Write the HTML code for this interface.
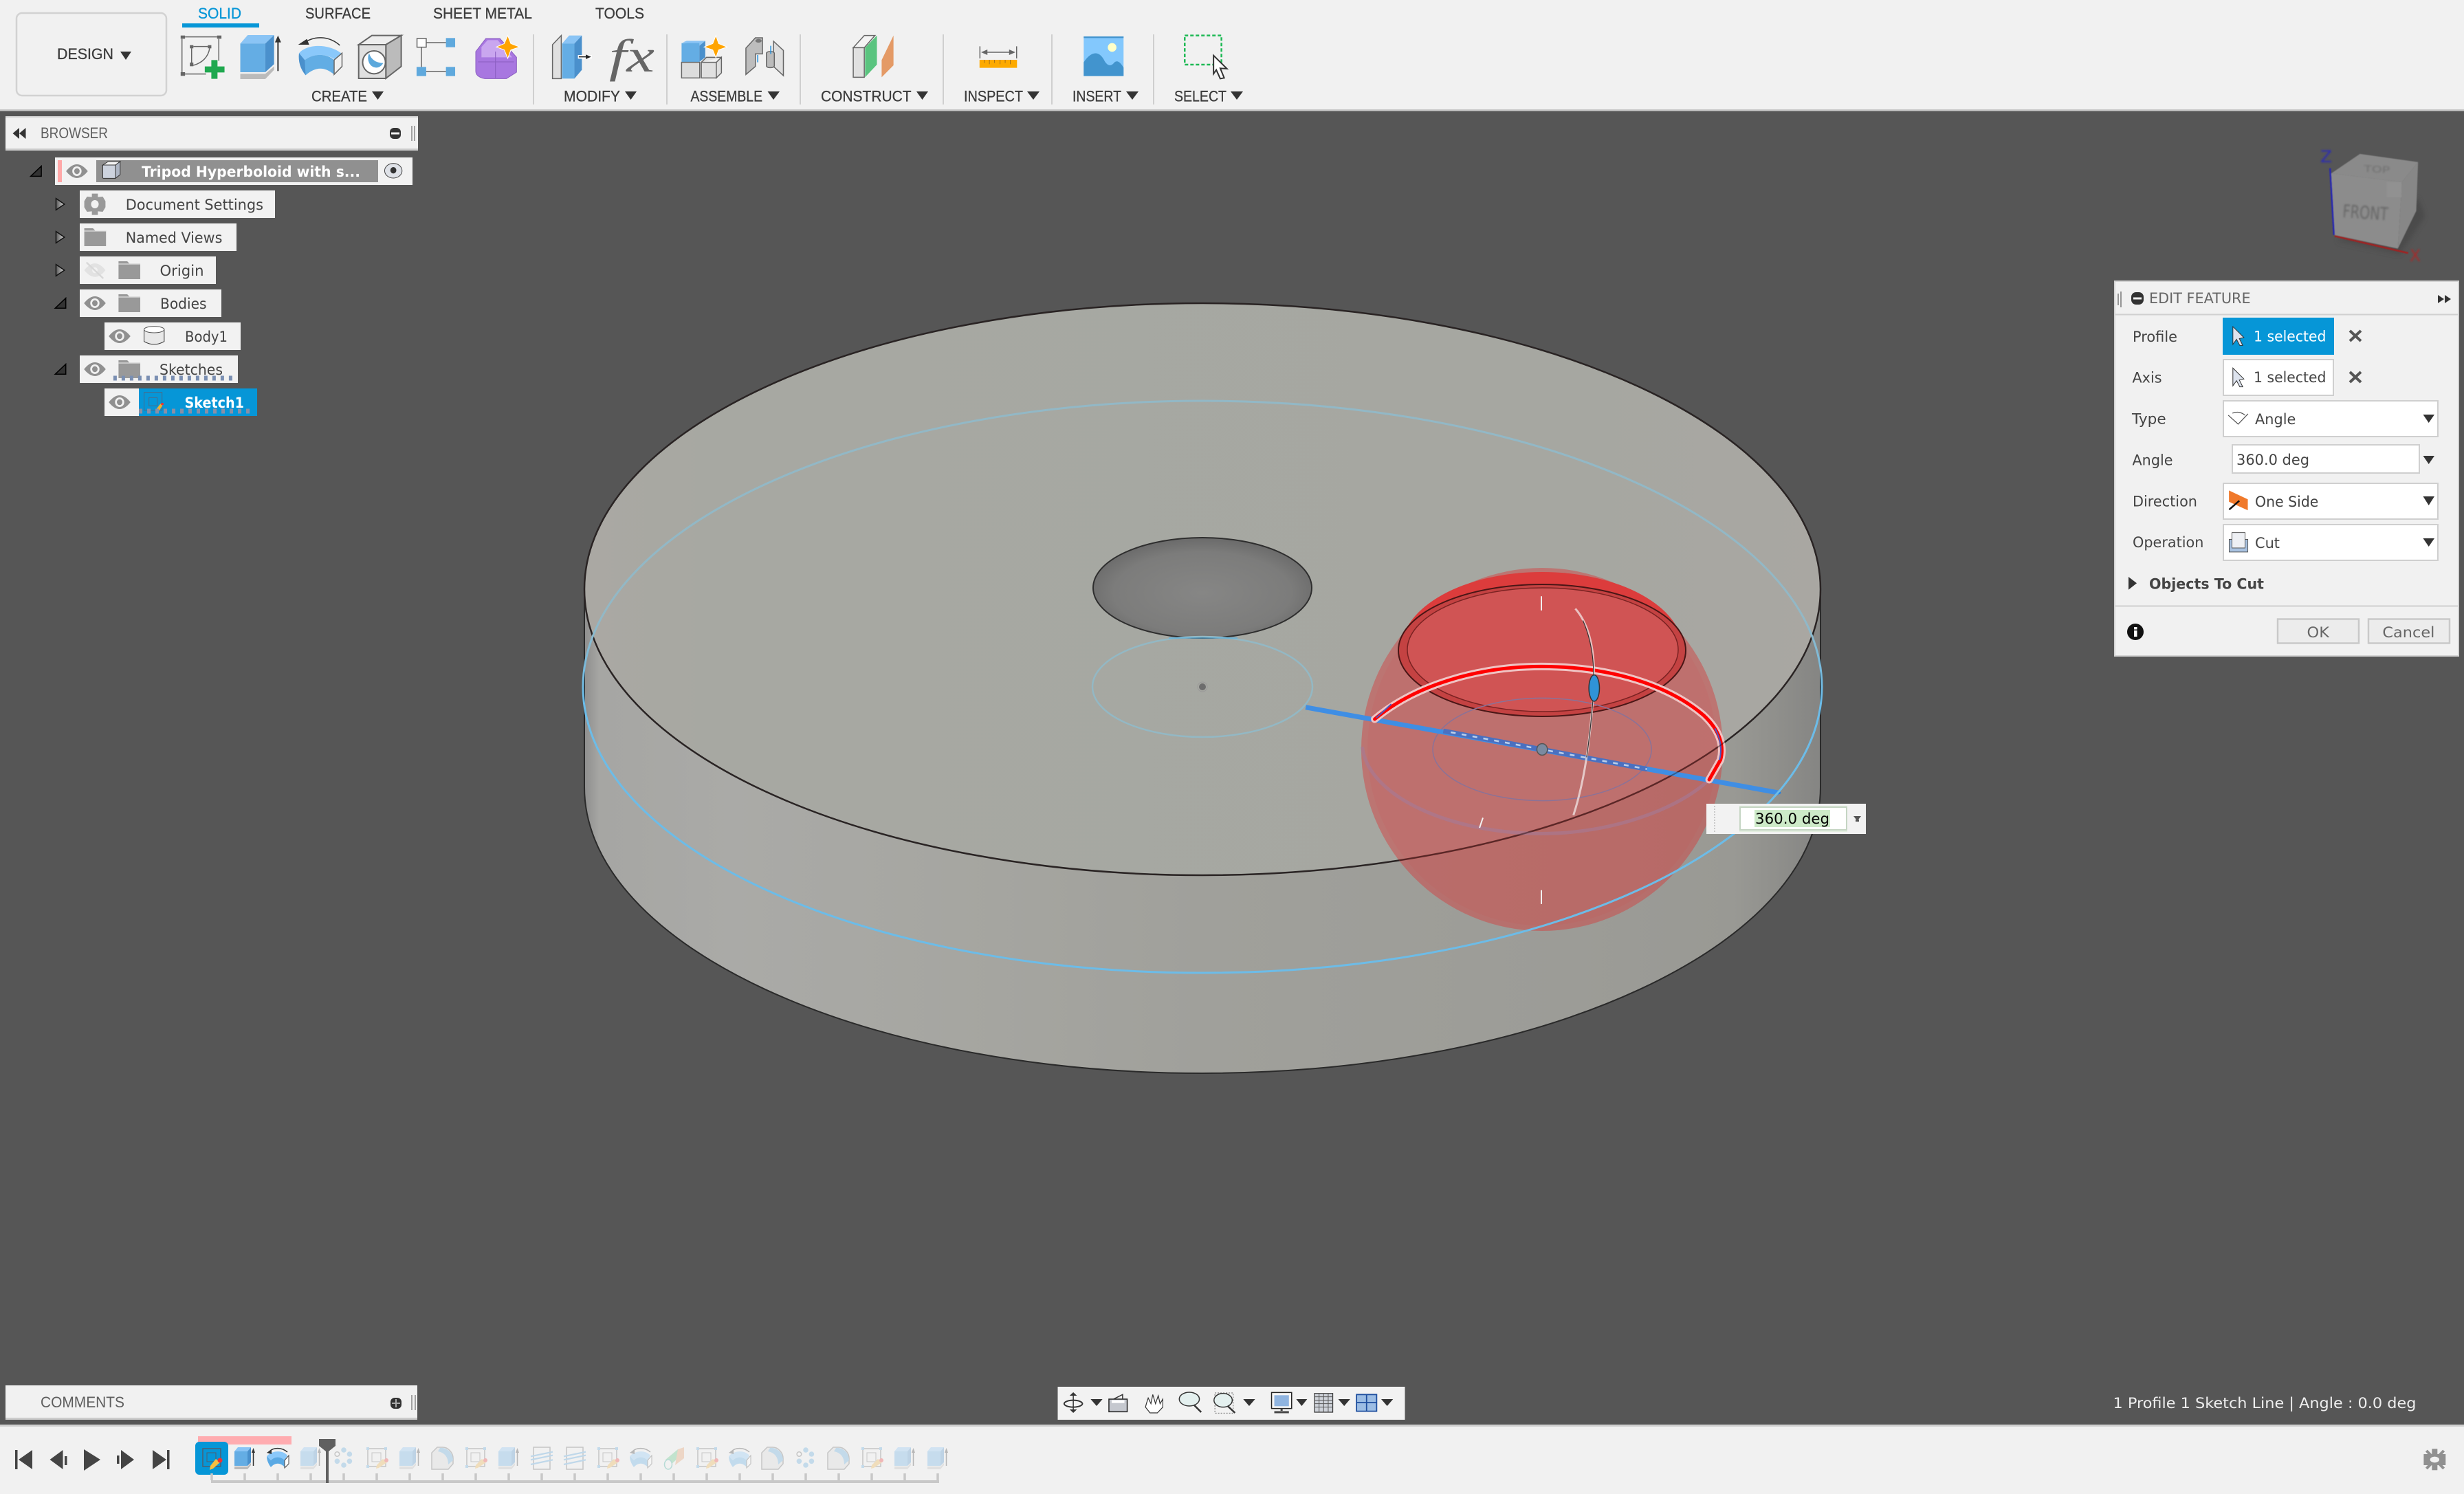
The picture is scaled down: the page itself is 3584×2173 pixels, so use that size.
<!DOCTYPE html>
<html lang="en"><head><meta charset="utf-8"><title>Fusion</title>
<style>
html,body{margin:0;padding:0;background:#555;overflow:hidden}
svg{display:block}
.z *,defs *{vector-effect:non-scaling-stroke}
.s{font-family:"Liberation Sans",sans-serif;font-size:22px;fill:#3c3c3c;stroke:#3c3c3c;stroke-width:.3}
.d{font-family:"DejaVu Sans","Liberation Sans",sans-serif;font-size:21px;fill:#444}
</style></head><body>
<svg xmlns="http://www.w3.org/2000/svg" width="3584" height="2173" viewBox="0 0 3584 2173">
<defs>
<linearGradient id="side" x1="0" x2="1" y1="0" y2="0"><stop offset="0" stop-color="#8e8e8e"/><stop offset=".012" stop-color="#a6a6a3"/><stop offset=".12" stop-color="#aaaaa7"/><stop offset=".3" stop-color="#a6a6a1"/><stop offset=".5" stop-color="#a0a09b"/><stop offset=".8" stop-color="#9c9c97"/><stop offset=".93" stop-color="#999994"/><stop offset="1" stop-color="#858583"/></linearGradient>
<linearGradient id="top" x1="0" x2="1" y1="0" y2="0"><stop offset="0" stop-color="#aaa8a3"/><stop offset=".1" stop-color="#a7a8a2"/><stop offset=".8" stop-color="#a6a7a1"/><stop offset="1" stop-color="#a9a7a2"/></linearGradient>
<linearGradient id="sk" gradientUnits="userSpaceOnUse" x1="0" x2="0" y1="900" y2="1010"><stop offset="0" stop-color="#92b8c6"/><stop offset="1" stop-color="#6cbce8"/></linearGradient>
<radialGradient id="hole" cx=".5" cy=".55" r=".58"><stop offset="0" stop-color="#868685"/><stop offset=".7" stop-color="#7c7c7b"/><stop offset="1" stop-color="#666"/></radialGradient>
<linearGradient id="trg" x1="0" x2="1" y1="0" y2="0"><stop offset="0" stop-color="#555"/><stop offset="1" stop-color="#ddd"/></linearGradient>
<filter id="b2"><feGaussianBlur stdDeviation="1.2"/></filter>
<filter id="b8"><feGaussianBlur stdDeviation="9"/></filter>
<g id="eye"><path d="M-40 0Q0-60 40 0Q0 60-40 0Z" fill="#909090"/><ellipse rx="17" ry="21" fill="#f2f2f2"/><ellipse rx="10" ry="13" fill="#909090"/></g>
<g id="folder"><path d="M0 0H32L40 10H80V78H0Z" fill="#999"/><path d="M0 12H80" stroke="#f2f2f2" stroke-width="1"/></g>
<g id="tria"><path d="M-20 22H19V-22Z" fill="#333" stroke="#000" stroke-width="1.5"/></g>
<g id="trib"><path d="M-16-25L15 0L-16 25Z" fill="url(#trg)" stroke="#111" stroke-width="1.5"/></g>

<g id="tex"><path d="M-15-10L-10-16H9L4-10Z" fill="#8ac4f5"/><rect x="-15" y="-10" width="19" height="21" fill="#64ade4"/><path d="M4-10L9-16V6L4 11Z" fill="#4a90cc"/><path d="M-15 12H4L9 7V10L4 16H-15Z" fill="#bbb"/><path d="M12.500-12V11" stroke="#333" stroke-width="1.500"/><path d="M10-8L12.500-15L15-8Z" fill="#333"/></g>
<g id="trv"><path d="M-16-3C-8-12 8-12 14-4L10 3C4-3-4-3-10 3Z" fill="#8ac8fa"/><path d="M-16-3L-10 3C-4-3 4-3 10 3V13C4 6-4 6-10 13C-14 8-16 2-16-3Z" fill="#5aa9e4"/><path d="M10 3L16-4V8L10 14Z" fill="#fff" stroke="#444" stroke-width="1"/><path d="M-12-10C-6-16 6-16 14-9" fill="none" stroke="#333" stroke-width="1.500"/><path d="M-16-8L-9-13L-9-6Z" fill="#333"/></g>
<g id="tci" fill="#5ba8dc"><circle cx="0" cy="-12" r="3.800"/><circle cx="8.400" cy="-6" r="3.800"/><circle cx="8.400" cy="4.300" r="3.800"/><circle cx="0" cy="10" r="3.800"/><circle cx="-9.600" cy="4.300" r="3.800"/><circle cx="-9.600" cy="-6" r="3.300" fill="#fff" stroke="#666" stroke-width="1.500"/></g>
<g id="tfi"><path d="M-16-8L-8-16H0C8-16 15-8 15 0V8L8 16H-16Z" fill="#d8d8d8" stroke="#666" stroke-width="1.500"/><path d="M-4-15C6-16 15-8 15 3L8 9C8 0 4-8-7-10Z" fill="#5ba8dc"/></g>
<g id="tst"><rect x="-12" y="-16" width="24" height="32" fill="none" stroke="#666" stroke-width="1.500"/><path d="M-16-2.700L16-9.300M-16 2.300L16-4.300M-16 9L16 2.300" stroke="#4e9fdc" stroke-width="2.200"/></g>
<g id="tgr"><path d="M-12 2L6-13V0L-6 11Z" fill="#5ac47f"/><path d="M6-13L15-16V0L2 10Z" fill="#e49a66"/><ellipse cx="-8" cy="9" rx="5.500" ry="7" fill="#f2f2f2" stroke="#3a9" stroke-width="1.500"/></g>
<g id="tsk"><rect x="-13" y="-14" width="26" height="26" fill="none" stroke="#666" stroke-width="1.500"/><g fill="#5ba8dc"><rect x="-15" y="-16" width="4" height="4"/><rect x="11" y="-16" width="4" height="4"/><rect x="-15" y="10" width="4" height="4"/></g><rect x="-7" y="-8" width="13" height="13" fill="none" stroke="#666" stroke-width="1"/><path d="M9 1L15 6L3 14L-1 15L0 10Z" fill="#f0b040"/><circle cx="14" cy="3" r="3" fill="#e33"/></g>
<g id="tsa"><rect x="-13" y="-14" width="26" height="26" fill="none" stroke="#4d5f70" stroke-width="1.500"/><rect x="-7" y="-8" width="13" height="13" fill="none" stroke="#4d5f70" stroke-width="1"/><path d="M6 1L12 6L2 15L-3 17L-2 11Z" fill="#f8c040"/><circle cx="12" cy="3" r="3.500" fill="#e33"/></g>
</defs>

<rect width="3584" height="2173" fill="#565656"/>

<!-- TOOLBAR -->
<rect width="3584" height="160" fill="#f1f1f1"/>
<rect y="159" width="3584" height="2.500" fill="#c9c9c9"/>
<rect x="24" y="19" width="218" height="120" rx="8" fill="#f1f1f1" stroke="#d2d2d2" stroke-width="2.500"/>
<text class="s" x="83" y="86" textLength="82" lengthAdjust="spacingAndGlyphs">DESIGN</text>
<text class="s" x="288" y="27" textLength="63" lengthAdjust="spacingAndGlyphs" style="fill:#0696d7;stroke:#0696d7">SOLID</text>
<text class="s" x="444" y="27" textLength="95" lengthAdjust="spacingAndGlyphs">SURFACE</text>
<text class="s" x="630" y="27" textLength="144" lengthAdjust="spacingAndGlyphs">SHEET METAL</text>
<text class="s" x="866" y="27" textLength="71" lengthAdjust="spacingAndGlyphs">TOOLS</text>
<rect x="265" y="34" width="112" height="6" fill="#0696d7"/>
<text class="s" x="453" y="147.500" textLength="81" lengthAdjust="spacingAndGlyphs">CREATE</text>
<text class="s" x="820" y="147.500" textLength="82" lengthAdjust="spacingAndGlyphs">MODIFY</text>
<text class="s" x="1004.500" y="147.500" textLength="104.500" lengthAdjust="spacingAndGlyphs">ASSEMBLE</text>
<text class="s" x="1194" y="147.500" textLength="131.500" lengthAdjust="spacingAndGlyphs">CONSTRUCT</text>
<text class="s" x="1402" y="147.500" textLength="86" lengthAdjust="spacingAndGlyphs">INSPECT</text>
<text class="s" x="1560" y="147.500" textLength="71" lengthAdjust="spacingAndGlyphs">INSERT</text>
<text class="s" x="1708" y="147.500" textLength="76" lengthAdjust="spacingAndGlyphs">SELECT</text>
<g fill="#333">
<path d="M175 75H191L183 87Z"/><path d="M541 133H558L549.500 145Z"/><path d="M909 133H926L917.500 145Z"/><path d="M1116.500 133H1134L1125 145Z"/><path d="M1333 133H1350L1341.500 145Z"/><path d="M1494 133H1512L1503 145Z"/><path d="M1638 133H1656L1647 145Z"/><path d="M1790 133H1808L1799 145Z"/>
</g>
<g fill="#cfcfcf"><rect x="775" y="50" width="2" height="102"/><rect x="969" y="50" width="2" height="102"/><rect x="1163" y="50" width="2" height="102"/><rect x="1371" y="50" width="2" height="102"/><rect x="1529" y="50" width="2" height="102"/><rect x="1677" y="50" width="2" height="102"/></g>
<text x="886" y="104" textLength="66" lengthAdjust="spacingAndGlyphs" style="font-family:'Liberation Serif',serif;font-style:italic;font-size:68px;fill:#666">fx</text>

<g class="z" transform="scale(.6378,.3333)">
 <g fill="#666"><rect x="412" y="155" width="10" height="14"/><rect x="495" y="155" width="10" height="14"/><rect x="412" y="315" width="10" height="16"/><rect x="433" y="197" width="8" height="14"/><rect x="474" y="197" width="8" height="14"/><rect x="433" y="273" width="8" height="16"/></g>
 <path d="M422 161H495M415 170V315M422 323H470M499 170V265M441 203H474M437 211V273M441 285C460 275 475 250 478 211" fill="none" stroke="#666" stroke-width="1.500"/>
 <path d="M482 262H496V290H512V316H496V344H482V316H467V290H482Z" fill="#1fa84f"/>
 <path d="M548 190L565 153H625L605 190Z" fill="#8ac4f5"/><rect x="548" y="190" width="57" height="125" fill="#64ade4"/><path d="M605 190L625 153V280L605 315Z" fill="#4a90cc"/><path d="M548 322H605L625 290V305L605 345H548Z" fill="#bbb"/>
 <path d="M634 175V310" stroke="#333" stroke-width="2"/><path d="M627 185L634 155L641 185Z" fill="#333"/>
 <path d="M682 232C700 190 750 190 778 232L765 262C745 232 715 232 695 262Z" fill="#8ac8fa"/>
 <path d="M682 232L695 262C715 232 745 232 762 262V325C740 290 720 290 697 328C685 300 680 270 682 232Z" fill="#62ade4"/>
 <path d="M682 232L695 262L697 328C685 300 680 270 682 232Z" fill="#4a90cc"/>
 <path d="M762 262L780 232V290L762 325Z" fill="#f0f0f0" stroke="#666" stroke-width="1.500"/>
 <path d="M775 198C750 155 715 155 692 190" fill="none" stroke="#333" stroke-width="1.500"/><path d="M680 195L700 170L705 195Z" fill="#333"/>
 <path d="M818 195L848 155H915L880 195Z" fill="#eee" stroke="#666" stroke-width="2"/><path d="M880 195L915 155V290L880 342Z" fill="#bbb" stroke="#666" stroke-width="2"/><rect x="818" y="195" width="62" height="147" fill="#e0e0e0" stroke="#666" stroke-width="2"/>
 <ellipse cx="853" cy="272" rx="26" ry="50" fill="#fff" stroke="#666" stroke-width="2"/><path d="M842 232A18 40 0 1 0 874 275C856 275 845 255 842 232Z" fill="#5ba8dc"/>
 <rect x="951" y="168" width="21" height="38" fill="#fff" stroke="#666" stroke-width="1.500"/><g fill="#5fa9dd"><rect x="1017" y="166" width="21" height="40"/><rect x="950" y="292" width="22" height="40"/><rect x="1017" y="292" width="21" height="40"/></g>
 <path d="M972 186H1017M961 206V292M972 312H1017" stroke="#666" stroke-width="1.500"/>
 <path d="M1108 168H1140L1178 250V315L1155 343H1105Q1085 335 1085 310V225Z" fill="#a877e0" stroke="#8a5ec0" stroke-width="1"/><path d="M1098 205L1112 175H1135L1168 250H1098Z" fill="#c9a6ef"/><path d="M1090 270H1172M1130 225V340" stroke="#8a5ec0" stroke-width="1"/>
 <path d="M1158 155L1165 190L1185 205L1165 218L1158 255L1150 218L1132 205L1150 190Z" fill="#ffa400" stroke="#fff" stroke-width="1"/>
 <path d="M1260 195L1280 155V343H1260Z" fill="#e0e0e0" stroke="#666" stroke-width="1.500"/>
 <path d="M1282 190L1298 155H1327L1310 190Z" fill="#8ac4f5"/><rect x="1282" y="190" width="28" height="153" fill="#64ade4"/><path d="M1310 190L1327 155V305L1310 343Z" fill="#4a90cc"/>
 <path d="M1318 240H1350V256H1318Z" fill="#fff"/><path d="M1320 248H1340" stroke="#222" stroke-width="1.500"/><path d="M1336 238L1348 248L1336 258Z" fill="#222"/>
</g>
<g class="z" transform="translate(1000,0) scale(.574,.3333)">
 <path d="M-12 185L-2 178H45L30 200Z" fill="#8ac4f5"/><rect x="-15" y="188" width="45" height="82" fill="#64ade4"/><path d="M30 200L45 178V250L30 270Z" fill="#4a90cc"/>
 <path d="M35 272H73V340H35ZM73 272L86 250V318L73 340ZM35 272L48 250H86" fill="#e0e0e0" stroke="#666" stroke-width="1.500"/><rect x="-15" y="272" width="46" height="68" fill="#dcdcdc" stroke="#666" stroke-width="1.500"/>
 <path d="M72 155L79 190L100 205L79 218L72 252L64 218L42 205L64 190Z" fill="#ffa400" stroke="#fff" stroke-width="1"/>
 <path d="M148 210L172 165H190V235H172V290L148 325Z" fill="#bdbdbd" stroke="#666" stroke-width="1.500"/>
 <ellipse cx="180" cy="178" rx="8" ry="8" fill="#777"/>
 <path d="M218 180L243 220V330L218 290Z" fill="#dedede" stroke="#666" stroke-width="1.500"/>
 <rect x="200" y="225" width="20" height="70" rx="8" fill="#bbb" stroke="#666" stroke-width="1.500"/>
 <path d="M178 240V272M211 200V235" stroke="#1d8fdf" stroke-width="1.500"/>
 <path d="M420 208L448 155H475L448 208Z" fill="#f4f4f4" stroke="#666" stroke-width="1.500"/><rect x="420" y="208" width="28" height="129" fill="#e0e0e0" stroke="#666" stroke-width="1.500"/>
 <path d="M450 208L480 155V282L450 337Z" fill="#5ac47f"/><path d="M492 262L522 155V285L492 337Z" fill="#e49a66"/>
 <path d="M741 202V255M834 202V255M750 228H825" stroke="#666" stroke-width="1.500"/><path d="M744 228L760 216V240ZM831 228L815 216V240Z" fill="#666"/>
 <rect x="740" y="261" width="95" height="35" fill="#fdaa00"/><path d="M752 261V275M765 261V280M778 261V275M792 261V280M805 261V275M818 261V280" stroke="#a5701c" stroke-width="1"/>
 <rect x="1004" y="159" width="101" height="173" fill="#83c8fd"/><rect x="1004" y="159" width="101" height="7" fill="#4294ce"/>
 <ellipse cx="1076" cy="207" rx="11" ry="19" fill="#ffffc8"/>
 <path d="M1004 272C1020 230 1040 215 1055 260C1062 285 1072 295 1082 272C1090 260 1098 275 1105 295V332H1004Z" fill="#4294ce"/>
 <rect x="1260" y="155" width="93" height="127" fill="none" stroke="#1db954" stroke-width="2.500" stroke-dasharray="5 3"/>
 <path d="M1333 242L1367 300L1350 298L1360 340L1350 343L1340 305L1333 322Z" fill="#fff" stroke="#333" stroke-width="2"/>
</g>

<!-- 3D BODY -->
<path d="M850 857V1145A899 416 0 0 0 2648 1145V857Z" fill="url(#side)"/>
<ellipse cx="1749" cy="857" rx="899" ry="416" fill="url(#top)"/>
<path d="M850 857V1145A899 416 0 0 0 2648 1145V857" fill="none" stroke="#2a2a2a" stroke-width="2"/>
<ellipse cx="1749" cy="857" rx="899" ry="416" fill="none" stroke="#2a2a2a" stroke-width="2.500"/>
<ellipse cx="1749" cy="855" rx="159" ry="73" fill="url(#hole)" stroke="#2e2e2e" stroke-width="2"/>
<ellipse cx="1749" cy="999" rx="160" ry="73" fill="none" stroke="#93b8c4" stroke-width="2.500"/>
<path d="M1700 928H1800" stroke="#4ab0e8" stroke-width="1.500" stroke-opacity=".7"/>
<circle cx="1749" cy="999" r="7" fill="none" stroke="#999" stroke-width="1"/><circle cx="1749" cy="999" r="5" fill="#6d6d6d"/>

<!-- SPHERE -->
<ellipse cx="2243" cy="1090" rx="263" ry="264" fill="#d63a3a" fill-opacity=".46"/>
<ellipse cx="2243" cy="1090" rx="254" ry="256" fill="#d63a3a" fill-opacity=".08"/>
<path d="M2038 945A205 113 0 0 1 2448 945Z" fill="#dc3c3c"/>
<ellipse cx="2243" cy="946" rx="209" ry="96" fill="#c44242" stroke="#4a1616" stroke-width="2"/>
<ellipse cx="2244" cy="945" rx="197" ry="90" fill="#d05454" stroke="#7a2222" stroke-width="1.500"/>
<g class="z" transform="translate(1880,780) scale(.5485,.3827)">
 <ellipse cx="662" cy="810" rx="290" ry="195" fill="none" stroke="#8a7298" stroke-width="1.500"/>
 <path d="M185 800C200 990 420 1130 662 1130C880 1130 1080 1000 1130 880" fill="none" stroke="#a57a98" stroke-opacity=".6" stroke-width="5"/>
 <path d="M35 650L1290 975" stroke="#3f8ee4" stroke-width="7"/>
 <path d="M400 740L940 885" stroke="#4a70c0" stroke-width="7"/>
 <path d="M420 745L940 885" stroke="#bcd0ea" stroke-width="2.500" stroke-dasharray="7 9"/>
 <circle cx="1290" cy="975" r="5" fill="#1a7fea"/>
 <ellipse cx="662" cy="810" rx="14" ry="22" fill="#7a8aa0" stroke="#555" stroke-width="1.500"/>
 <path d="M218 695C330 560 500 495 660 495C850 495 1000 570 1090 680C1135 740 1145 800 1135 850L1105 925" fill="none" stroke="#efc4c4" stroke-width="11" stroke-linecap="round"/>
 <path d="M218 695C330 560 500 495 660 495C850 495 1000 570 1090 680C1135 740 1145 800 1135 850L1105 925" fill="none" stroke="#f00" stroke-width="5" stroke-linecap="round"/>
 <path d="M222 690L262 638M1120 730C1135 770 1140 810 1132 850" fill="none" stroke="#4a5cc0" stroke-width="2"/>
 <path d="M750 275C790 340 810 460 795 650C785 820 770 950 745 1060" fill="none" stroke="#f4ecec" stroke-width="3" stroke-opacity=".72"/>
 <path d="M770 320C795 400 805 500 795 650C790 740 785 790 780 840" fill="none" stroke="#333" stroke-width="1.200"/>
 <ellipse cx="800" cy="577" rx="14" ry="50" fill="#2f93d8" stroke="#333" stroke-width="1.500"/>
 <path d="M660 228V282M660 1345V1398M505 1070L496 1108" stroke="#f2f2f2" stroke-width="2"/>
</g>
<ellipse cx="1749" cy="857" rx="899" ry="416" fill="none" stroke="#2a1a1a" stroke-opacity=".45" stroke-width="2"/>
<ellipse cx="1749" cy="999" rx="901" ry="416" fill="none" stroke="url(#sk)" stroke-width="3"/>

<!-- DIM POPUP -->
<rect x="2482" y="1169" width="232" height="44" fill="#f2f2f2"/>
<path d="M2494 1172V1210" stroke="#bbb" stroke-width="1.500" stroke-dasharray="2 2"/>
<rect x="2530" y="1172" width="157" height="38" fill="#e3eee0"/>
<rect x="2531" y="1174" width="155" height="33" fill="#fff" stroke="#c5d5c3" stroke-width="2"/>
<rect x="2552" y="1178" width="110" height="25" fill="#cdeac8"/>
<text class="d" x="2553" y="1198" textLength="108" lengthAdjust="spacingAndGlyphs" style="fill:#000">360.0 deg</text>
<path d="M2696 1187H2707L2701.500 1194Z" fill="#555"/><rect x="2699" y="1192" width="5" height="3" fill="#555"/>

<!-- VIEWCUBE -->
<g class="z" transform="translate(3060,190) scale(.3342,.4975)">
 <path d="M1010 320L1290 360L1400 250L1370 200Z" fill="#3f3f3f" opacity=".5" filter="url(#b8)"/>
 <g filter="url(#b2)">
 <path d="M990 125L1115 68L1368 92L1298 150Z" fill="#8a8a8a"/>
 <path d="M990 125L1298 150L1280 345L1005 305Z" fill="#8c8c8c"/>
 <path d="M1298 150L1368 92L1360 235L1280 345Z" fill="#878787"/>
 <rect x="1232" y="150" width="65" height="45" fill="#9a9a9a" opacity=".35"/>
 <path d="M985 110L1002 305" stroke="#2626b0" stroke-width="2.500"/>
 <path d="M1005 308L1325 358" stroke="#a02020" stroke-width="2.500"/>
 </g>
</g>
<text x="3407" y="316" textLength="66" lengthAdjust="spacingAndGlyphs" transform="rotate(4 3407 316)" style="font-family:'DejaVu Sans',sans-serif;font-size:26px;fill:#666" filter="url(#b2)">FRONT</text>
<text x="3438" y="250" textLength="38" lengthAdjust="spacingAndGlyphs" transform="rotate(3 3438 250)" style="font-family:'DejaVu Sans',sans-serif;font-size:13px;fill:#707070" filter="url(#b2)">TOP</text>
<text x="3375" y="236" textLength="17" lengthAdjust="spacingAndGlyphs" style="font-family:'DejaVu Sans',sans-serif;font-size:24px;fill:#2a2ab4" filter="url(#b2)">Z</text>
<text x="3505" y="380" textLength="16" lengthAdjust="spacingAndGlyphs" style="font-family:'DejaVu Sans',sans-serif;font-size:24px;fill:#a52a2a" filter="url(#b2)">X</text>

<!-- BROWSER -->
<rect x="8" y="169" width="600" height="50" fill="#f1f1f1"/>
<rect x="8" y="216" width="600" height="3" fill="#ccc"/>
<rect x="8" y="169" width="600" height="2" fill="#d6d6d6"/>
<text class="s" x="59" y="201" textLength="98" lengthAdjust="spacingAndGlyphs" style="fill:#5e5e5e;stroke:none">BROWSER</text>
<path d="M28 186L18.500 194L28 202ZM37.500 186L28 194L37.500 202Z" fill="#333"/>
<rect x="567" y="186" width="16" height="16" rx="6" fill="#333"/><rect x="569" y="192.500" width="12" height="3" fill="#f1f1f1"/>
<path d="M599 183V205M603 183V205" stroke="#888" stroke-width="1.500"/>

<g fill="#f2f2f2">
<rect x="80" y="229" width="520" height="40"/>
<rect x="116" y="277" width="284" height="40"/>
<rect x="116" y="325" width="228" height="40"/>
<rect x="116" y="373" width="198" height="40"/>
<rect x="116" y="421" width="206" height="40"/>
<rect x="152" y="469" width="198" height="40"/>
<rect x="116" y="517" width="230" height="40"/>
<rect x="152" y="565" width="222" height="40"/>
</g>
<rect x="84" y="233" width="6" height="32" fill="#ffa8a8"/>
<rect x="140" y="233" width="410" height="32" fill="#909090"/>
<rect x="202" y="565" width="172" height="40" fill="#0696d7"/>
<text class="d" x="206" y="257" textLength="318" lengthAdjust="spacingAndGlyphs" style="font-weight:bold;fill:#fff">Tripod Hyperboloid with s...</text>
<text class="d" x="182.700" y="305" textLength="200.300" lengthAdjust="spacingAndGlyphs">Document Settings</text>
<text class="d" x="182.700" y="353" textLength="140.700" lengthAdjust="spacingAndGlyphs">Named Views</text>
<text class="d" x="232.500" y="401" textLength="64" lengthAdjust="spacingAndGlyphs">Origin</text>
<text class="d" x="233" y="449" textLength="67.500" lengthAdjust="spacingAndGlyphs">Bodies</text>
<text class="d" x="269" y="497" textLength="62" lengthAdjust="spacingAndGlyphs">Body1</text>
<text class="d" x="232" y="545" textLength="92" lengthAdjust="spacingAndGlyphs">Sketches</text>
<text class="d" x="268.500" y="593" textLength="86.500" lengthAdjust="spacingAndGlyphs" style="font-weight:bold;fill:#fff">Sketch1</text>

<g class="z" transform="translate(0,160) scale(.3954,.3333)">
 <use href="#tria" x="133" y="267"/><use href="#trib" x="222" y="411"/><use href="#trib" x="222" y="555"/><use href="#trib" x="222" y="699"/><use href="#tria" x="223" y="843"/><use href="#tria" x="223" y="1131"/>
 <use href="#eye" x="283" y="267"/><use href="#eye" x="349" y="843"/><use href="#eye" x="440" y="987"/><use href="#eye" x="349" y="1131"/><use href="#eye" x="440" y="1275"/>
 <path d="M310 699Q349 640 388 699Q349 758 310 699Z" fill="#e2e2e2"/><ellipse cx="349" cy="699" rx="10" ry="13" fill="#f2f2f2"/><path d="M318 665L380 735" stroke="#d8d8d8" stroke-width="2.500"/>
 <path d="M378 240L398 225H442L425 240Z" fill="#f5f5f5" stroke="#333" stroke-width="1"/><path d="M425 240L442 225V282L425 298Z" fill="#aeb6c4" stroke="#333" stroke-width="1"/><rect x="378" y="240" width="47" height="58" rx="3" fill="#cdd3de" stroke="#333" stroke-width="1"/>
 <circle cx="1447" cy="265" r="32" fill="#dfe2e8" stroke="#444" stroke-width="1"/><ellipse cx="1447" cy="263" rx="11" ry="14" fill="#333"/>
 <path d="M338 365H360V380L378 378L388 398V424L378 444L360 442V458H338V442L320 444L310 424V398L320 378L338 380Z" fill="#999"/><ellipse cx="349" cy="411" rx="14" ry="18" fill="#f2f2f2"/>
 <use href="#folder" x="310" y="516"/><use href="#folder" x="436" y="660"/><use href="#folder" x="436" y="804"/><use href="#folder" x="436" y="1092"/>
 <path d="M530 958H604V1010Q567 1035 530 1010Z" fill="#e8e8e8" stroke="#333" stroke-width="1"/><ellipse cx="567" cy="958" rx="37" ry="14" fill="#fff" stroke="#555" stroke-width="1"/>
 <rect x="530" y="1232" width="66" height="78" fill="none" stroke="#4a6a88" stroke-width="1"/><rect x="548" y="1255" width="30" height="36" fill="none" stroke="#4a6a88" stroke-width="1"/>
 <path d="M572 1310L590 1282L598 1290L582 1318Z" fill="#f0b030"/><circle cx="597" cy="1283" r="5" fill="#e33"/>
 <path d="M417 1170H862" stroke="#7a8fb2" stroke-width="7" stroke-dasharray="5 7"/>
 <path d="M511 1314H925" stroke="#8a8fa5" stroke-width="7" stroke-dasharray="5 7"/>
</g>

<!-- EDIT FEATURE -->
<rect x="3076" y="409" width="500" height="545" fill="#f1f1f1" stroke="#d4d4d4" stroke-width="2"/>
<path d="M3077 457.500H3575M3077 881.500H3575" stroke="#d0d0d0" stroke-width="2"/>
<path d="M3081 427V444M3085 424V447" stroke="#777" stroke-width="1.500"/>
<rect x="3100" y="425" width="18" height="18" rx="7" fill="#333"/><rect x="3103" y="432.500" width="12" height="3" fill="#f1f1f1"/>
<text class="d" x="3126" y="441" textLength="147.600" lengthAdjust="spacingAndGlyphs" style="fill:#666">EDIT FEATURE</text>
<path d="M3546 429L3555 435L3546 441ZM3556 429L3565 435L3556 441Z" fill="#333"/>
<g class="d">
<text x="3102" y="497" textLength="65" lengthAdjust="spacingAndGlyphs">Profile</text>
<text x="3101.500" y="556.500" textLength="43" lengthAdjust="spacingAndGlyphs">Axis</text>
<text x="3101" y="616.500" textLength="49.600" lengthAdjust="spacingAndGlyphs">Type</text>
<text x="3101.500" y="676.500" textLength="59" lengthAdjust="spacingAndGlyphs">Angle</text>
<text x="3102" y="736.500" textLength="94" lengthAdjust="spacingAndGlyphs">Direction</text>
<text x="3102" y="796" textLength="103.400" lengthAdjust="spacingAndGlyphs">Operation</text>
</g>
<rect x="3233" y="462" width="162" height="54" fill="#0696d7"/>
<text class="d" x="3278" y="496.500" textLength="105.500" lengthAdjust="spacingAndGlyphs" style="fill:#fff">1 selected</text>
<g fill="#fff" stroke="#cfcfcf" stroke-width="2">
<rect x="3234" y="523" width="160" height="52"/>
<rect x="3234" y="583" width="312" height="52"/>
<rect x="3247" y="647" width="272" height="41"/>
<rect x="3234" y="703" width="312" height="52"/>
<rect x="3234" y="763" width="312" height="52"/>
</g>
<g class="d">
<text x="3278" y="556" textLength="105.500" lengthAdjust="spacingAndGlyphs">1 selected</text>
<text x="3280" y="617" textLength="59.400" lengthAdjust="spacingAndGlyphs">Angle</text>
<text x="3253" y="676" textLength="106" lengthAdjust="spacingAndGlyphs">360.0 deg</text>
<text x="3280" y="737" textLength="92.400" lengthAdjust="spacingAndGlyphs">One Side</text>
<text x="3280" y="797" textLength="36" lengthAdjust="spacingAndGlyphs">Cut</text>
<text x="3126" y="856.500" textLength="167" lengthAdjust="spacingAndGlyphs" style="font-weight:bold">Objects To Cut</text>
</g>
<path d="M3418 481L3434 496M3434 481L3418 496M3418 541L3434 556M3434 541L3418 556" stroke="#555" stroke-width="4"/>
<g fill="#333">
<path d="M3524.500 603H3541L3532.700 615Z"/><path d="M3524.500 663H3541L3532.700 675Z"/><path d="M3524.500 722H3541L3532.700 735Z"/><path d="M3524.500 783H3541L3532.700 795Z"/><path d="M3096 839L3108 848.300L3096 857.700Z"/>
</g>
<g class="z" transform="translate(3060,190) scale(.3342,.4975)">
 <path d="M562 573L610 605L590 608L605 628L592 628L578 610L562 625Z" fill="#dde3ee" stroke="#333" stroke-width="1"/>
 <path d="M562 694L610 726L590 729L605 749L592 749L578 731L562 746Z" fill="#dde3ee" stroke="#333" stroke-width="1"/>
 <path d="M542 832L585 858L628 828M560 826Q590 818 615 832" fill="none" stroke="#555" stroke-width="1.200"/>
 <path d="M545 1052L627 1078V1110L545 1085Z" fill="#f0792b"/><path d="M590 1082L546 1108" stroke="#111" stroke-width="2.500"/>
 <rect x="546" y="1195" width="81" height="37" fill="#a9c3e2" stroke="#555" stroke-width="1"/><rect x="558" y="1175" width="57" height="45" fill="#eef0f4" stroke="#555" stroke-width="1"/>
</g>
<rect x="3313" y="900.500" width="118" height="35" fill="#ececec" stroke="#c9c9c9" stroke-width="2.500"/>
<rect x="3445" y="900.500" width="118" height="35" fill="#ececec" stroke="#c9c9c9" stroke-width="2.500"/>
<text class="d" x="3355.500" y="927" textLength="32.500" lengthAdjust="spacingAndGlyphs" style="fill:#666">OK</text>
<text class="d" x="3465.400" y="927" textLength="76" lengthAdjust="spacingAndGlyphs" style="fill:#666">Cancel</text>
<circle cx="3106" cy="919" r="12" fill="#111"/><rect x="3104" y="917" width="4.500" height="9" fill="#fff"/><rect x="3104" y="912" width="4.500" height="3.500" fill="#fff"/>

<!-- COMMENTS -->
<rect x="8" y="2015" width="599" height="50" fill="#f1f1f1"/><rect x="8" y="2062" width="599" height="3" fill="#ccc"/>
<text class="s" x="59" y="2047" textLength="122" lengthAdjust="spacingAndGlyphs" style="fill:#5e5e5e;stroke:none">COMMENTS</text>
<rect x="568" y="2033" width="16" height="16" rx="6" fill="#333"/><path d="M570 2041H582M576 2035V2047" stroke="#aaa" stroke-width="2"/>
<path d="M599 2029V2051M604 2029V2051" stroke="#888" stroke-width="1.500"/>

<!-- BOTTOM -->
<rect y="2073" width="3584" height="100" fill="#f1f1f1"/><rect y="2072" width="3584" height="3" fill="#cfcfcf"/>
<text class="d" x="3073.500" y="2048" textLength="441" lengthAdjust="spacingAndGlyphs" style="fill:#eee">1 Profile 1 Sketch Line | Angle : 0.0 deg</text>
<rect x="1538.500" y="2017" width="505" height="48" fill="#f2f2f2"/>

<!-- TIMELINE -->
<g fill="#444">
 <rect x="22" y="2109" width="3.500" height="28"/><path d="M47 2109V2137L27 2123Z"/>
 <path d="M91.500 2109V2137L72.500 2123Z"/><rect x="94" y="2118" width="3.500" height="13"/>
 <path d="M122 2108L146 2123L122 2139Z"/>
 <rect x="170" y="2117" width="3.500" height="12"/><path d="M176 2109V2137L195 2123Z"/>
 <rect x="243" y="2109" width="3.500" height="28"/><path d="M222 2109V2137L242 2123Z"/>
</g>
<rect x="288" y="2089" width="136" height="12" fill="#ffacb0"/>
<rect x="284" y="2097" width="48" height="48" rx="6" fill="#0696d7"/>
<use href="#tsa" x="308" y="2121"/>
<use href="#tex" x="356" y="2121"/>
<use href="#trv" x="404" y="2121"/>
<g opacity=".3">
 <use href="#tex" x="452" y="2121"/><use href="#tci" x="500" y="2121"/><use href="#tsk" x="548" y="2121"/><use href="#tex" x="596" y="2121"/><use href="#tfi" x="644" y="2121"/><use href="#tsk" x="692" y="2121"/><use href="#tex" x="740" y="2121"/><use href="#tst" x="788" y="2121"/><use href="#tst" x="836" y="2121"/><use href="#tsk" x="884" y="2121"/><use href="#trv" x="932" y="2121"/><use href="#tgr" x="980" y="2121"/><use href="#tsk" x="1028" y="2121"/><use href="#trv" x="1076" y="2121"/><use href="#tfi" x="1124" y="2121"/><use href="#tci" x="1172" y="2121"/><use href="#tfi" x="1220" y="2121"/><use href="#tsk" x="1268" y="2121"/><use href="#tex" x="1316" y="2121"/><use href="#tex" x="1364" y="2121"/>
</g>
<rect x="307" y="2153" width="1059" height="4" fill="#c8c8c8"/>
<path d="M308 2143V2153M356 2143V2153M404 2143V2153M452 2143V2153M500 2143V2153M548 2143V2153M596 2143V2153M644 2143V2153M692 2143V2153M740 2143V2153M788 2143V2153M836 2143V2153M884 2143V2153M932 2143V2153M980 2143V2153M1028 2143V2153M1076 2143V2153M1124 2143V2153M1172 2143V2153M1220 2143V2153M1268 2143V2153M1316 2143V2153M1364 2143V2153" stroke="#c8c8c8" stroke-width="3.500"/>
<path d="M464 2093H488V2103L478 2111V2157H474V2111L464 2103Z" fill="#606060"/>

<g class="z" transform="translate(1500,2000) scale(1.329,.3333)">
 <path d="M46 78V162" stroke="#333" stroke-width="1.500"/><ellipse cx="46" cy="125" rx="10" ry="15" fill="none" stroke="#333" stroke-width="2"/><path d="M42 90L46 75L50 90ZM42 150L46 165L50 150Z" fill="#333"/>
 <path d="M65 105H78L71.500 135Z" fill="#333"/>
 <rect x="85" y="105" width="20" height="55" fill="#c5c8cf" stroke="#222" stroke-width="1.500"/><rect x="88" y="110" width="14" height="12" fill="#fff"/><path d="M90 105L100 85V105" fill="none" stroke="#333" stroke-width="1.500"/>
 <path d="M126 125L128 100L131 125L133 85L136 125L139 90L141 125L144 105V140L138 165H130L125 140Z" fill="#fff" stroke="#333" stroke-width="1.200"/>
 <ellipse cx="173" cy="105" rx="11" ry="30" fill="#e4f0ef" stroke="#333" stroke-width="1.500"/><path d="M178 130L186 162" stroke="#333" stroke-width="2.500"/>
 <rect x="201" y="78" width="20" height="88" fill="none" stroke="#666" stroke-width="1" stroke-dasharray="2 2"/><ellipse cx="210" cy="110" rx="10" ry="30" fill="#e4f0ef" stroke="#333" stroke-width="1.500"/><path d="M215 135L223 165" stroke="#333" stroke-width="2.500"/>
 <path d="M232 105H245L238.500 135Z" fill="#333"/>
 <rect x="263" y="76" width="22" height="70" fill="#f6f6f6" stroke="#222" stroke-width="1.500"/><rect x="266" y="88" width="16" height="48" fill="#8fb4e0"/><path d="M274 146V156M266 162H282" stroke="#444" stroke-width="3"/>
 <path d="M290 105H302L296 135Z" fill="#333"/>
 <rect x="310" y="80" width="20" height="82" fill="#cfd3da" stroke="#333" stroke-width="1.200"/><path d="M310 95H330M310 110H330M310 125H330M310 140H330M315 80V162M320 80V162M325 80V162" stroke="#555" stroke-width="1"/>
 <path d="M336 105H349L342.500 135Z" fill="#333"/>
 <rect x="356" y="85" width="22" height="73" fill="#9cbde4" stroke="#1f4f9f" stroke-width="1.800"/><path d="M367 85V158M356 120H378" stroke="#1f4f9f" stroke-width="1.800"/>
 <path d="M383 105H396L389.500 135Z" fill="#333"/>
 <g fill="#909090"><rect x="1533" y="322" width="6" height="93"/><rect x="1524" y="345" width="24" height="48"/></g>
 <path d="M1527 330L1546 408M1546 330L1527 408" stroke="#909090" stroke-width="4"/><ellipse cx="1536" cy="369" rx="5" ry="13" fill="#f1f1f1"/>
</g>
</svg>
</body></html>
